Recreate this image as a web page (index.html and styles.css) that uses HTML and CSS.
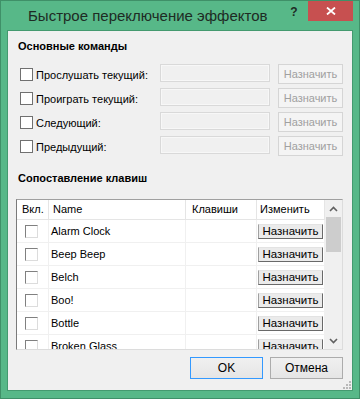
FILE: index.html
```html
<!DOCTYPE html>
<html lang="ru">
<head>
<meta charset="utf-8">
<title>Быстрое переключение эффектов</title>
<link rel="stylesheet" href="styles.css">
</head>
<body>
<div class="window">
  <div class="titlebar">
    <span class="title">Быстрое переключение эффектов</span>
    <span class="help">?</span>
    <span class="close"><svg width="10" height="8" viewBox="0 0 10 8"><path d="M1 0.5 L9 7.5 M9 0.5 L1 7.5" stroke="#fff" stroke-width="1.8" fill="none"/></svg></span>
  </div>
  <div class="frame">
    <div class="heading h-main">Основные команды</div>
    <div class="cmds">
      <div class="cmd"><div class="chk"><span class="cbox"></span><span class="ltext">Прослушать текущий:</span></div><span class="field"></span><span class="btn-dis">Назначить</span></div>
      <div class="cmd"><div class="chk"><span class="cbox"></span><span class="ltext">Проиграть текущий:</span></div><span class="field"></span><span class="btn-dis">Назначить</span></div>
      <div class="cmd"><div class="chk"><span class="cbox"></span><span class="ltext">Следующий:</span></div><span class="field"></span><span class="btn-dis">Назначить</span></div>
      <div class="cmd"><div class="chk"><span class="cbox"></span><span class="ltext">Предыдущий:</span></div><span class="field"></span><span class="btn-dis">Назначить</span></div>
    </div>
    <div class="heading h-map">Сопоставление клавиш</div>
    <div class="list">
      <div class="list-main">
        <div class="hdr">
          <div class="hcell w1 p1">Вкл.</div>
          <div class="hcell w2 p2">Name</div>
          <div class="hcell w3 p3">Клавиши</div>
          <div class="hcell w4 p4">Изменить</div>
        </div>
        <div class="row"><div class="cell w1 ccell"><span class="lbox"></span></div><div class="cell w2 ncell">Alarm Clock</div><div class="cell w3"></div><div class="cell w4 bcell"><span class="rbtn">Назначить</span></div></div>
        <div class="row"><div class="cell w1 ccell"><span class="lbox"></span></div><div class="cell w2 ncell">Beep Beep</div><div class="cell w3"></div><div class="cell w4 bcell"><span class="rbtn">Назначить</span></div></div>
        <div class="row"><div class="cell w1 ccell"><span class="lbox"></span></div><div class="cell w2 ncell">Belch</div><div class="cell w3"></div><div class="cell w4 bcell"><span class="rbtn">Назначить</span></div></div>
        <div class="row"><div class="cell w1 ccell"><span class="lbox"></span></div><div class="cell w2 ncell">Boo!</div><div class="cell w3"></div><div class="cell w4 bcell"><span class="rbtn">Назначить</span></div></div>
        <div class="row"><div class="cell w1 ccell"><span class="lbox"></span></div><div class="cell w2 ncell">Bottle</div><div class="cell w3"></div><div class="cell w4 bcell"><span class="rbtn">Назначить</span></div></div>
        <div class="row"><div class="cell w1 ccell"><span class="lbox"></span></div><div class="cell w2 ncell">Broken Glass</div><div class="cell w3"></div><div class="cell w4 bcell"><span class="rbtn">Назначить</span></div></div>
      </div>
      <div class="vscroll">
        <div class="arrow"><svg width="9" height="6" viewBox="0 0 9 6"><path d="M1 5 L4.5 1.5 L8 5" stroke="#606060" stroke-width="1.6" fill="none"/></svg></div>
        <div class="thumb"></div>
        <div class="track"></div>
        <div class="arrow"><svg width="9" height="6" viewBox="0 0 9 6"><path d="M1 1 L4.5 4.5 L8 1" stroke="#606060" stroke-width="1.6" fill="none"/></svg></div>
      </div>
    </div>
    <div class="footer">
      <button class="btn default">OK</button>
      <button class="btn">Отмена</button>
    </div>
    <svg class="grip" width="8" height="8" viewBox="0 0 8 8">
      <rect x="6" y="0" width="2" height="2" fill="#b9b9b9"/>
      <rect x="3" y="3" width="2" height="2" fill="#b9b9b9"/>
      <rect x="6" y="3" width="2" height="2" fill="#b9b9b9"/>
      <rect x="0" y="6" width="2" height="2" fill="#b9b9b9"/>
      <rect x="3" y="6" width="2" height="2" fill="#b9b9b9"/>
      <rect x="6" y="6" width="2" height="2" fill="#b9b9b9"/>
    </svg>
  </div>
</div>
</body>
</html>
```
FILE: styles.css
```css
* { box-sizing: border-box; margin: 0; padding: 0; }
body {
  margin: 0;
  background: #fff;
  font-family: "Liberation Sans", Arial, sans-serif;
  font-size: 11px;
  color: #000;
}
.window {
  width: 360px;
  height: 399px;
  background: #57b888;
  border: 1px solid #3f9068;
  display: flex;
  flex-direction: column;
}
.titlebar {
  height: 29px;
  display: flex;
  align-items: flex-start;
  padding-left: 27px;
}
.title {
  font-size: 15px;
  line-height: 17px;
  margin-top: 6px;
  color: #1e2b24;
}
.help {
  margin-left: auto;
  width: 16px;
  text-align: center;
  font-weight: bold;
  font-size: 12px;
  line-height: 14px;
  margin-top: 4px;
  margin-right: 6px;
  color: #1e2b24;
}
.close {
  width: 45px;
  height: 20px;
  background: #c75050;
  margin-right: 6px;
  display: flex;
  align-items: center;
  justify-content: center;
}
.frame {
  position: relative;
  margin: 0 6px 7px;
  flex: 1;
  border: 1px solid #449a6f;
  background: #f0f0f0;
  display: flex;
  flex-direction: column;
}
.heading {
  font-weight: bold;
  line-height: 13px;
  padding-left: 10px;
}
.h-main { margin-top: 9px; }
.h-map { margin-top: 16px; }
.cmds {
  margin-top: 11px;
  padding-left: 12px;
  display: flex;
  flex-direction: column;
  gap: 4px;
}
.cmd {
  display: flex;
  align-items: flex-start;
  height: 20px;
}
.chk {
  width: 140px;
  display: flex;
  align-items: flex-start;
  gap: 3px;
}
.cbox {
  width: 13px;
  height: 13px;
  margin-top: 4px;
  border: 1px solid #707070;
  background: #fff;
}
.ltext {
  line-height: 13px;
  margin-top: 5px;
}
.field {
  width: 110px;
  height: 18px;
  border: 1px solid #d9d9d9;
  box-shadow: inset 0 0 0 1px #f7f7f7;
}
.btn-dis {
  width: 65px;
  height: 20px;
  margin-left: 8px;
  border: 1px solid #d5d5d5;
  background: #f4f4f4;
  color: #a0a0a0;
  display: flex;
  align-items: center;
  justify-content: center;
}
.list {
  margin: 14px 9px 0 8px;
  height: 151px;
  border: 1px solid;
  border-color: #a0a0a0 #dcdcdc #dcdcdc #7a7a7a;
  background: #fff;
  display: flex;
}
.list-main {
  width: 308px;
  overflow: hidden;
}
.hdr {
  display: flex;
  height: 20px;
  border-bottom: 1px solid #e5e5e5;
}
.hcell {
  border-right: 1px solid #e5e5e5;
  line-height: 19px;
  white-space: nowrap;
}
.w1 { width: 32px; }
.w2 { width: 137px; }
.w3 { width: 71px; }
.w4 { width: 68px; }
.p1 { padding-left: 5px; }
.p2 { padding-left: 4px; }
.p3 { padding-left: 6px; }
.p4 { padding-left: 3px; }
.row {
  display: flex;
  height: 23px;
  flex-shrink: 0;
  border-bottom: 1px solid #f0f0f0;
}
.cell {
  border-right: 1px solid #f0f0f0;
  height: 22px;
}
.ccell {
  padding-left: 8px;
  display: flex;
  align-items: center;
}
.lbox {
  width: 13px;
  height: 13px;
  border: 1px solid;
  border-color: #808080 #dcdcdc #dcdcdc #808080;
  background: #fff;
}
.ncell {
  padding-left: 2px;
  line-height: 22px;
  white-space: nowrap;
}
.bcell {
  display: flex;
  align-items: center;
  padding-left: 1px;
}
.rbtn {
  width: 65px;
  height: 15px;
  border: 1px solid;
  border-color: #e3e3e3 #696969 #696969 #a0a0a0;
  background: #ebebeb;
  font-size: 11.5px;
  line-height: 13px;
  text-align: center;
}
.vscroll {
  width: 17px;
  background: #f0f0f0;
  display: flex;
  flex-direction: column;
}
.arrow {
  height: 17px;
  display: flex;
  align-items: center;
  justify-content: center;
}
.thumb {
  height: 35px;
  margin: 0 1px;
  background: #cdcdcd;
}
.track { flex: 1; }
.footer {
  margin-top: 7px;
  padding-right: 9px;
  display: flex;
  justify-content: flex-end;
  gap: 7px;
}
.btn {
  width: 73px;
  height: 22px;
  border: 1px solid #acacac;
  background: linear-gradient(#f0f0f0, #e5e5e5);
  font-family: "Liberation Sans", Arial, sans-serif;
  font-size: 12px;
  color: #000;
}
.btn.default { border-color: #3399ff; }
.grip {
  position: absolute;
  right: 1px;
  bottom: 1px;
}
```
